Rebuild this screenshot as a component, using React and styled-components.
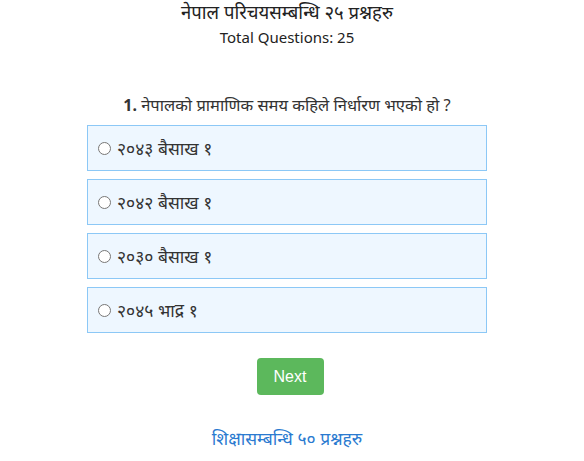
import React from "react";
import styled, { createGlobalStyle } from "styled-components";

const Global = createGlobalStyle`
  body { margin: 0; background: #fff; font-family: "Noto Sans", "Open Sans", sans-serif; color: #333; }
`;

const Page = styled.div`
  display: flex;
  flex-direction: column;
  align-items: center;
  padding-right: 10px;
`;

const Title = styled.div`
  font-size: 18.5px;
  line-height: 24px;
  color: #222;
`;

const Total = styled.div`
  font-size: 15px;
  line-height: 24px;
  color: #222;
  margin-top: 1px;
`;

const Question = styled.div`
  margin-top: 44px;
  font-size: 16.5px;
  line-height: 24px;
  color: #333;
  b { font-weight: 700; font-size: 16px; }
`;

const Options = styled.div`
  margin-top: 8px;
  width: 400px;
  display: flex;
  flex-direction: column;
  gap: 8px;
`;

const Option = styled.label`
  box-sizing: border-box;
  height: 46px;
  border: 1px solid #8cc8f6;
  background: #eef7ff;
  display: flex;
  align-items: center;
  padding-left: 10px;
  font-size: 17.5px;
  color: #333;
  gap: 6px;
  input { margin: 0; width: 13px; height: 13px; }
`;

const Next = styled.button`
  margin-top: 25px;
  margin-left: 6px;
  width: 67px;
  height: 37px;
  border: none;
  border-radius: 4px;
  background: #5cb85c;
  color: #fff;
  font-family: "Liberation Sans", Arial, sans-serif;
  font-size: 16px;
`;

const Link = styled.a`
  margin-top: 31px;
  font-size: 17.5px;
  line-height: 24px;
  color: #2a7ad0;
  text-decoration: none;
`;

const opts = ["२०४३ बैसाख १", "२०४२ बैसाख १", "२०३० बैसाख १", "२०४५ भाद्र १"];

export default function App() {
  return (
    <Page>
      <Global />
      <Title>नेपाल परिचयसम्बन्धि २५ प्रश्नहरु</Title>
      <Total>Total Questions: 25</Total>
      <Question><b>1.</b> नेपालको प्रामाणिक समय कहिले निर्धारण भएको हो ?</Question>
      <Options>
        {opts.map((o) => (
          <Option key={o}>
            <input type="radio" name="q" />
            {o}
          </Option>
        ))}
      </Options>
      <Next>Next</Next>
      <Link href="#">शिक्षासम्बन्धि ५० प्रश्नहरु</Link>
    </Page>
  );
}
